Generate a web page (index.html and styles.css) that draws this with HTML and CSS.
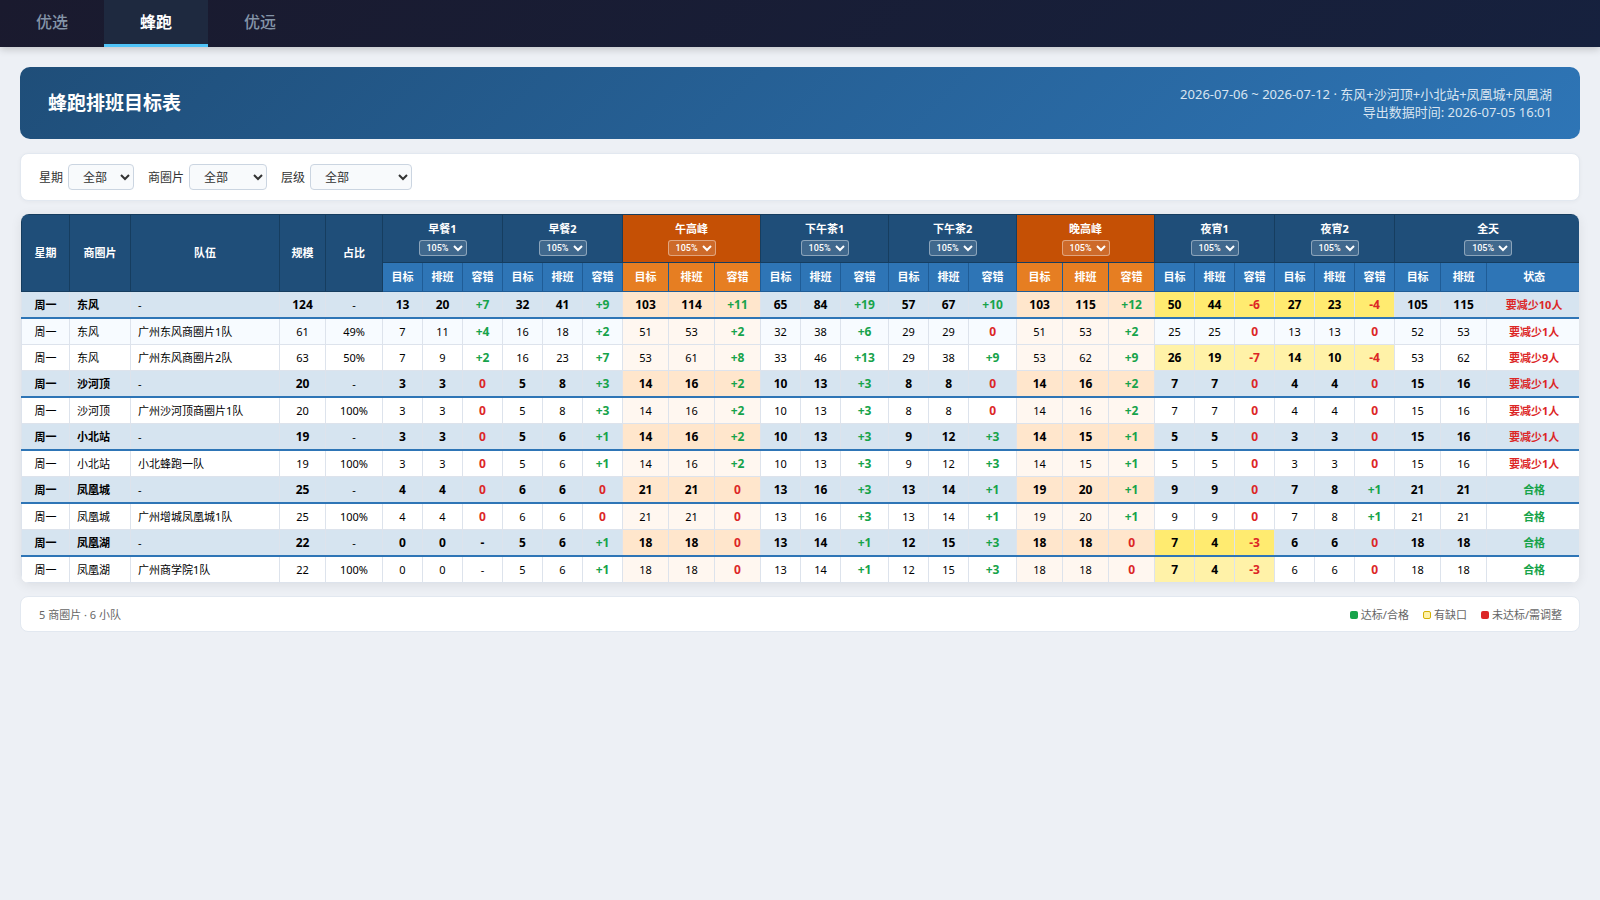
FILE: index.html
```html
<!DOCTYPE html>
<html lang="zh-CN">
<head>
<meta charset="utf-8">
<title>蜂跑排班目标表</title>
<link rel="stylesheet" href="styles.css">
</head>
<body>
<nav class="tabs">
  <button class="tab" type="button">优选</button>
  <button class="tab tab-active" type="button">蜂跑</button>
  <button class="tab" type="button">优远</button>
</nav>
<main class="page">
  <header class="banner">
    <h1 class="banner-title">蜂跑排班目标表</h1>
    <p class="banner-meta">2026-07-06 ~ 2026-07-12 · 东风+沙河顶+小北站+凤凰城+凤凰湖<br>导出数据时间: 2026-07-05 16:01</p>
  </header>
  <form class="card filters">
    <div class="field"><label for="day">星期</label><select class="filter-select select-s" id="day"><option>全部</option></select></div>
    <div class="field"><label for="area">商圈片</label><select class="filter-select select-m" id="area"><option>全部</option></select></div>
    <div class="field"><label for="level">层级</label><select class="filter-select select-l" id="level"><option>全部</option></select></div>
  </form>
  <div class="table-card">
    <table class="plan">
      <colgroup>
        <col class="c-day"><col class="c-area"><col class="c-team"><col class="c-mid"><col class="c-ratio">
        <col class="c-num"><col class="c-num"><col class="c-num">
        <col class="c-num"><col class="c-num"><col class="c-num">
        <col class="c-mid"><col class="c-mid"><col class="c-mid">
        <col class="c-num"><col class="c-num"><col class="c-wide">
        <col class="c-num"><col class="c-num"><col class="c-wide">
        <col class="c-mid"><col class="c-mid"><col class="c-mid">
        <col class="c-num"><col class="c-num"><col class="c-num">
        <col class="c-num"><col class="c-num"><col class="c-num">
        <col class="c-mid"><col class="c-mid"><col class="c-status">
      </colgroup>
      <thead>
        <tr class="head-main">
          <th rowspan="2">星期</th><th rowspan="2">商圈片</th><th rowspan="2">队伍</th><th rowspan="2">规模</th><th rowspan="2">占比</th>
          <th colspan="3"><label for="r1">早餐1</label><select class="rate" id="r1"><option>105%</option></select></th>
          <th colspan="3"><label for="r2">早餐2</label><select class="rate" id="r2"><option>105%</option></select></th>
          <th colspan="3" class="peak"><label for="r3">午高峰</label><select class="rate" id="r3"><option>105%</option></select></th>
          <th colspan="3"><label for="r4">下午茶1</label><select class="rate" id="r4"><option>105%</option></select></th>
          <th colspan="3"><label for="r5">下午茶2</label><select class="rate" id="r5"><option>105%</option></select></th>
          <th colspan="3" class="peak"><label for="r6">晚高峰</label><select class="rate" id="r6"><option>105%</option></select></th>
          <th colspan="3"><label for="r7">夜宵1</label><select class="rate" id="r7"><option>105%</option></select></th>
          <th colspan="3"><label for="r8">夜宵2</label><select class="rate" id="r8"><option>105%</option></select></th>
          <th colspan="3"><label for="r9">全天</label><select class="rate" id="r9"><option>105%</option></select></th>
        </tr>
        <tr class="head-sub">
          <th>目标</th><th>排班</th><th>容错</th>
          <th>目标</th><th>排班</th><th>容错</th>
          <th class="peak">目标</th><th class="peak">排班</th><th class="peak">容错</th>
          <th>目标</th><th>排班</th><th>容错</th>
          <th>目标</th><th>排班</th><th>容错</th>
          <th class="peak">目标</th><th class="peak">排班</th><th class="peak">容错</th>
          <th>目标</th><th>排班</th><th>容错</th>
          <th>目标</th><th>排班</th><th>容错</th>
          <th>目标</th><th>排班</th><th>状态</th>
        </tr>
      </thead>
      <tbody id="rows"></tbody>
    </table>
  </div>
  <footer class="card summary">
    <span>5 商圈片 · 6 小队</span>
    <ul class="legend">
      <li><i class="dot dot-ok"></i>达标/合格</li>
      <li><i class="dot dot-gap"></i>有缺口</li>
      <li><i class="dot dot-bad"></i>未达标/需调整</li>
    </ul>
  </footer>
</main>
<script src="script.js"></script>
</body>
</html>
```
FILE: styles.css
```css
* {
  box-sizing: border-box;
}

body {
  margin: 0;
  background: #edf0f5;
  color: #000;
  font-family: "Noto Sans", "Noto Sans CJK SC", sans-serif;
  font-size: 11px;
}

.tabs {
  display: flex;
  height: 47px;
  background: linear-gradient(135deg, #1a1a2e, #16213e);
  box-shadow: 0 2px 8px rgba(0, 0, 0, 0.2);
}

.tab {
  width: 104px;
  border: 0;
  border-bottom: 3px solid transparent;
  padding: 0;
  background: none;
  color: #8494a8;
  font: 500 16px/24px "Noto Sans", "Noto Sans CJK SC", sans-serif;
}

.tab-active {
  border-bottom-color: #4fc3f7;
  background: #1e293f;
  color: #fff;
  font-weight: 700;
}

.page {
  display: flex;
  flex-direction: column;
  padding: 20px;
}

.banner {
  display: flex;
  align-items: center;
  justify-content: space-between;
  margin-bottom: 14px;
  padding: 18px 28px;
  border-radius: 10px;
  background: linear-gradient(135deg, #1f4e79, #2e75b6);
  color: #fff;
}

.banner-title {
  margin: 0;
  font-size: 19px;
  line-height: 28px;
}

.banner-meta {
  margin: 0;
  color: #d9e5f1;
  font-size: 13px;
  line-height: 18px;
  text-align: right;
}

.card {
  border: 1px solid #e2e8f0;
  border-radius: 8px;
  background: #fff;
}

.filters {
  display: flex;
  align-items: center;
  gap: 14px;
  margin-bottom: 13px;
  padding: 10px 18px;
  box-shadow: 0 1px 4px rgba(0, 0, 0, 0.04);
  color: #333;
  font-size: 12px;
}

.field {
  display: flex;
  align-items: center;
  gap: 5px;
}

.filter-select {
  height: 26px;
  padding: 0 0 0 10px;
  border: 1px solid #cbd5e1;
  border-radius: 4px;
  background: #f8fafc;
  color: #333;
  font: 12px "Noto Sans", "Noto Sans CJK SC", sans-serif;
}

.select-s { width: 66px; }
.select-m { width: 78px; }
.select-l { width: 102px; }

.table-card {
  margin: 0 1px 13px;
  border-radius: 8px;
  overflow: hidden;
  box-shadow: 0 2px 12px rgba(0, 0, 0, 0.08);
}

.plan {
  width: 100%;
  border-collapse: collapse;
  table-layout: fixed;
  background: #fff;
}

.c-day { width: 48px; }
.c-area { width: 61px; }
.c-team { width: 149px; }
.c-ratio { width: 57px; }
.c-num { width: 40px; }
.c-mid { width: 46px; }
.c-wide { width: 48px; }
.c-status { width: 95px; }

.plan th {
  padding: 0;
  color: #fff;
  font-size: 11px;
  font-weight: 700;
  line-height: 16px;
}

.head-main th {
  border: 1px solid #163d5f;
  background: #1f4e79;
}

.head-main th[colspan] {
  height: 48px;
}

.head-main .peak {
  background: #c55005;
}

.head-main label {
  display: block;
  margin-bottom: 3px;
}

.head-sub th {
  height: 29px;
  border: 1px solid #1f5c96;
  border-top-color: #163d5f;
  background: #2e75b6;
}

.head-sub .peak {
  background: #e67e22;
}

.rate {
  display: block;
  width: 48px;
  height: 16px;
  margin: 0 auto;
  padding: 0 0 0 3px;
  border: 1px solid rgba(255, 255, 255, 0.4);
  border-radius: 3px;
  background: rgba(255, 255, 255, 0.15);
  color: #fff;
  font: 500 9px Roboto, "Liberation Sans", sans-serif;
}

.rate option {
  color: #333;
}

.plan td {
  padding: 4px 2px;
  border: 1px solid #dde3ec;
  line-height: 17px;
  text-align: center;
  white-space: nowrap;
}

.plan .text {
  padding-left: 7px;
  text-align: left;
}

.plan .first-team td {
  background: #f7fbff;
}

.plan td.peak {
  background: #fff7f0;
}

.plan .group td {
  border-bottom: 2px solid #2e75b6;
  background: #d6e4f0;
}

.plan .group td.peak {
  background: #ffe6cc;
}

.plan td.gap {
  background: #fff2a8;
}

.plan .group td.gap {
  background: #ffeb70;
}

.group .name,
.plan .status {
  font-weight: 700;
}

.group .num,
.num.gap,
.num.diff {
  font-size: 12px;
  font-weight: 700;
}

.plan .ok { color: #16a34a; }
.plan .bad { color: #dc2626; }

.summary {
  display: flex;
  align-items: center;
  justify-content: space-between;
  padding: 9px 17px 8px 18px;
  color: #666;
  line-height: 17px;
}

.legend {
  display: flex;
  gap: 14px;
  margin: 0;
  padding: 0;
  list-style: none;
}

.legend li {
  display: flex;
  align-items: center;
  gap: 3px;
}

.dot {
  width: 8px;
  height: 8px;
  border-radius: 2px;
}

.dot-ok { background: #16a34a; }
.dot-gap { border: 1px solid #d4b106; background: #fff2a8; }
.dot-bad { background: #dc2626; }
```
FILE: script.js
```js
// Columns: area, team, size, ratio, then target/planned for eight periods and the whole day.
const rows = [
  ["东风", "-", 124, "-", [13,20, 32,41, 103,114, 65,84, 57,67, 103,115, 50,44, 27,23, 105,115], "要减少10人"],
  ["东风", "广州东风商圈片1队", 61, "49%", [7,11, 16,18, 51,53, 32,38, 29,29, 51,53, 25,25, 13,13, 52,53], "要减少1人"],
  ["东风", "广州东风商圈片2队", 63, "50%", [7,9, 16,23, 53,61, 33,46, 29,38, 53,62, 26,19, 14,10, 53,62], "要减少9人"],
  ["沙河顶", "-", 20, "-", [3,3, 5,8, 14,16, 10,13, 8,8, 14,16, 7,7, 4,4, 15,16], "要减少1人"],
  ["沙河顶", "广州沙河顶商圈片1队", 20, "100%", [3,3, 5,8, 14,16, 10,13, 8,8, 14,16, 7,7, 4,4, 15,16], "要减少1人"],
  ["小北站", "-", 19, "-", [3,3, 5,6, 14,16, 10,13, 9,12, 14,15, 5,5, 3,3, 15,16], "要减少1人"],
  ["小北站", "小北蜂跑一队", 19, "100%", [3,3, 5,6, 14,16, 10,13, 9,12, 14,15, 5,5, 3,3, 15,16], "要减少1人"],
  ["凤凰城", "-", 25, "-", [4,4, 6,6, 21,21, 13,16, 13,14, 19,20, 9,9, 7,8, 21,21], "合格"],
  ["凤凰城", "广州增城凤凰城1队", 25, "100%", [4,4, 6,6, 21,21, 13,16, 13,14, 19,20, 9,9, 7,8, 21,21], "合格"],
  ["凤凰湖", "-", 22, "-", [0,0, 5,6, 18,18, 13,14, 12,15, 18,18, 7,4, 6,6, 18,18], "合格"],
  ["凤凰湖", "广州商学院1队", 22, "100%", [0,0, 5,6, 18,18, 13,14, 12,15, 18,18, 7,4, 6,6, 18,18], "合格"]
];

const body = document.getElementById("rows");

function addCell(tr, text, className) {
  const td = tr.insertCell();
  td.textContent = text;
  td.className = className;
}

rows.forEach(([area, team, size, ratio, values, status], index) => {
  const tr = body.insertRow();
  if (team === "-") tr.className = "group";
  if (index === 1) tr.className = "first-team";
  addCell(tr, "周一", "name");
  addCell(tr, area, "name text");
  addCell(tr, team, "text");
  addCell(tr, size, "num");
  addCell(tr, ratio, "");
  for (let i = 0; i < 9; i++) {
    const target = values[i * 2];
    const planned = values[i * 2 + 1];
    const diff = planned - target;
    const day = i === 8;
    const peak = i === 2 || i === 5 ? " peak" : "";
    const gap = !day && diff < 0 ? " gap" : "";
    addCell(tr, target, "num" + peak + gap);
    addCell(tr, planned, "num" + peak + gap);
    if (day) {
      addCell(tr, status, "status " + (status === "合格" ? "ok" : "bad"));
    } else if (target === 0) {
      addCell(tr, "-", "num");
    } else {
      addCell(tr, diff > 0 ? "+" + diff : diff, "num diff " + (diff > 0 ? "ok" : "bad") + peak + gap);
    }
  }
});
```
